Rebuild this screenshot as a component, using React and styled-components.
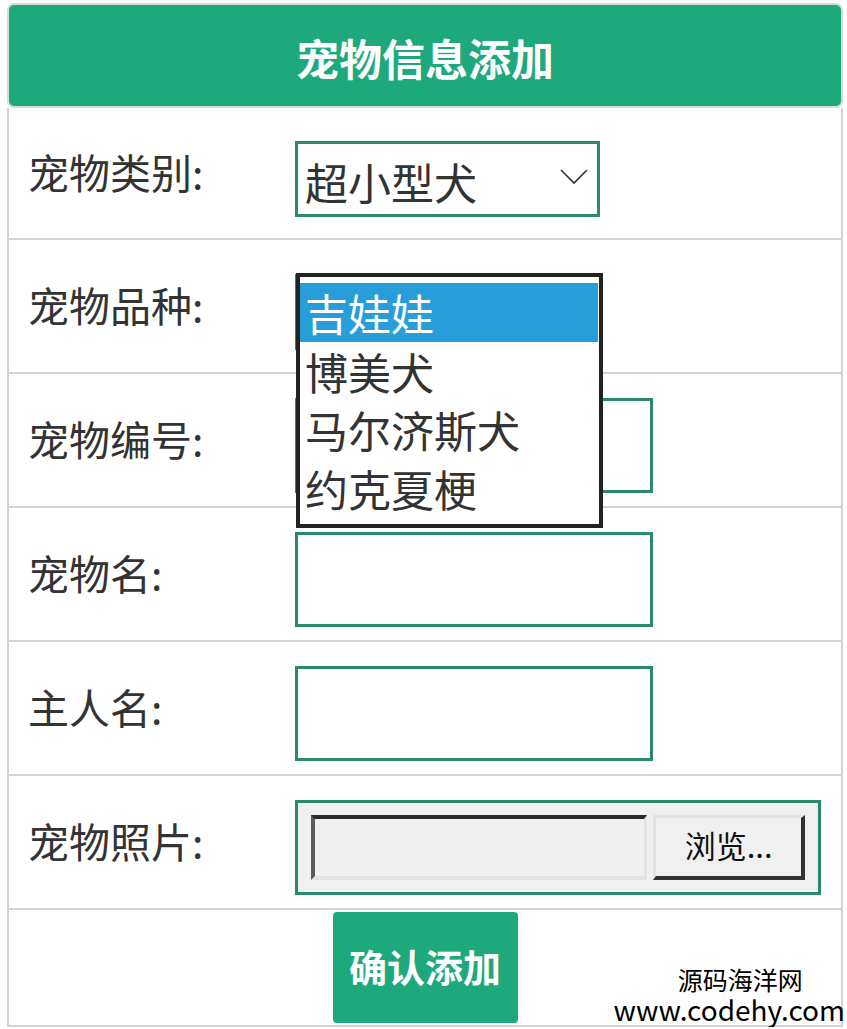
import React from "react";
import styled, { createGlobalStyle } from "styled-components";

const GlobalStyle = createGlobalStyle`
  body {
    margin: 0;
    background: #ffffff;
    font-family: "Noto Sans CJK SC", "Noto Sans", sans-serif;
    color: #333333;
  }
`;

const Page = styled.div`
  padding: 3px 0 0 7px;
  width: 836px;
`;

const Form = styled.form`
  position: relative;
  width: 836px;
  box-sizing: border-box;
`;

const Header = styled.div`
  height: 105px;
  box-sizing: border-box;
  border: 2px solid #d2dcd8;
  border-radius: 7px;
  background: #1ea97c;
  display: flex;
  align-items: center;
  justify-content: center;
`;

const Title = styled.h1`
  margin: 2px 0 0;
  font-size: 43px;
  font-weight: 700;
  color: #ffffff;
`;

const Body = styled.div`
  border-left: 2px solid #d3d3d3;
  border-right: 2px solid #d3d3d3;
`;

const Row = styled.div`
  display: grid;
  grid-template-columns: 286px 1fr;
  align-items: center;
  height: ${(props) => props.height || 134}px;
  box-sizing: border-box;
  border-bottom: 2px solid #d3d3d3;
`;

const Label = styled.label`
  padding-left: 19px;
  font-size: 41px;
  color: #333333;
  line-height: 1;
  margin-top: -4px;
`;

const Control = styled.div`
  position: relative;
  margin-top: ${(props) => props.offset ?? 10}px;
  display: flex;
`;

const SelectBox = styled.div`
  width: 305px;
  height: 76px;
  box-sizing: border-box;
  border: 3px solid #2a8a6b;
  display: flex;
  align-items: center;
  justify-content: space-between;
  padding: 4px 9px 0 7px;
  font-size: 43px;
  color: #333333;
  background: #ffffff;
`;

const Chevron = styled.svg`
  width: 28px;
  height: 16px;
  margin-top: -8px;
`;

const Popup = styled.ul`
  position: absolute;
  top: -1px;
  left: 1px;
  z-index: 10;
  width: 307px;
  margin: 0;
  padding: 6px 1px 7px 0;
  box-sizing: border-box;
  list-style: none;
  background: #ffffff;
  border: 4px solid #222222;
`;

const Option = styled.li`
  height: 58.5px;
  line-height: 58px;
  padding-left: 5px;
  font-size: 43px;
  color: ${(props) => (props.selected ? "#ffffff" : "#333333")};
  background: ${(props) => (props.selected ? "#279ed9" : "transparent")};
`;

const TextInput = styled.input`
  width: 358px;
  height: 95px;
  box-sizing: border-box;
  border: 3px solid #2a8a6b;
  padding: 0 10px;
  font-size: 36px;
  font-family: inherit;
  outline: none;
  background: #ffffff;
`;

const FileBox = styled.div`
  width: 526px;
  height: 95px;
  box-sizing: border-box;
  border: 3px solid #2a8a6b;
  background: #f0f0f0;
  display: flex;
  align-items: center;
  gap: 6px;
  padding: 0 13px;
`;

const FileField = styled.div`
  width: 337px;
  height: 65px;
  box-sizing: border-box;
  border-style: solid;
  border-width: 4px 3px 4px 4px;
  border-color: #2a2a2a #e2e2e2 #e2e2e2 #5a5a5a;
  background: #efefef;
`;

const BrowseButton = styled.button`
  width: 152px;
  height: 65px;
  box-sizing: border-box;
  border-style: solid;
  border-width: 3px 4px 4px 3px;
  border-color: #e4e4e4 #333333 #333333 #e4e4e4;
  background: #f0f0f0;
  font-family: inherit;
  font-size: 31px;
  color: #111111;
  padding: 0 0 4px;
`;

const SubmitRow = styled.div`
  height: 117px;
  box-sizing: border-box;
  border-bottom: 2px solid #d3d3d3;
  display: flex;
  justify-content: center;
  padding-top: 2px;
`;

const SubmitButton = styled.button`
  width: 185px;
  height: 111px;
  border: none;
  border-radius: 4px;
  background: #1ea97c;
  color: #ffffff;
  font-family: inherit;
  font-size: 38px;
  font-weight: 700;
  padding: 0 0 4px;
`;

const Watermark = styled.div`
  position: absolute;
  right: -2px;
  bottom: 4px;
  text-align: center;
  color: #000000;
  line-height: 1;
`;

const MarkName = styled.div`
  font-size: 25px;
  padding-left: 22px;
  margin-bottom: 3px;
`;

const MarkUrl = styled.div`
  font-size: 28px;
`;

const breeds = ["吉娃娃", "博美犬", "马尔济斯犬", "约克夏梗"];

const App = () => {
  return (
    <>
      <GlobalStyle />
      <Page>
        <Form onSubmit={(e) => e.preventDefault()}>
          <Header>
            <Title>宠物信息添加</Title>
          </Header>
          <Body>
            <Row height={132}>
              <Label>宠物类别:</Label>
              <Control offset={12}>
                <SelectBox>
                  <span>超小型犬</span>
                  <Chevron viewBox="0 0 28 16">
                    <path d="M1 1 L14 14 L27 1" fill="none" stroke="#333" strokeWidth="1.6" />
                  </Chevron>
                </SelectBox>
              </Control>
            </Row>
            <Row>
              <Label>宠物品种:</Label>
              <Control offset={12}>
                <SelectBox>
                  <span>吉娃娃</span>
                </SelectBox>
                <Popup>
                  {breeds.map((breed, index) => (
                    <Option key={breed} selected={index === 0}>
                      {breed}
                    </Option>
                  ))}
                </Popup>
              </Control>
            </Row>
            <Row>
              <Label>宠物编号:</Label>
              <Control>
                <TextInput type="text" />
              </Control>
            </Row>
            <Row>
              <Label>宠物名:</Label>
              <Control>
                <TextInput type="text" />
              </Control>
            </Row>
            <Row>
              <Label>主人名:</Label>
              <Control>
                <TextInput type="text" />
              </Control>
            </Row>
            <Row>
              <Label>宠物照片:</Label>
              <Control>
                <FileBox>
                  <FileField />
                  <BrowseButton type="button">浏览...</BrowseButton>
                </FileBox>
              </Control>
            </Row>
            <SubmitRow>
              <SubmitButton type="submit">确认添加</SubmitButton>
            </SubmitRow>
          </Body>
          <Watermark>
            <MarkName>源码海洋网</MarkName>
            <MarkUrl>www.codehy.com</MarkUrl>
          </Watermark>
        </Form>
      </Page>
    </>
  );
};

export default App;
